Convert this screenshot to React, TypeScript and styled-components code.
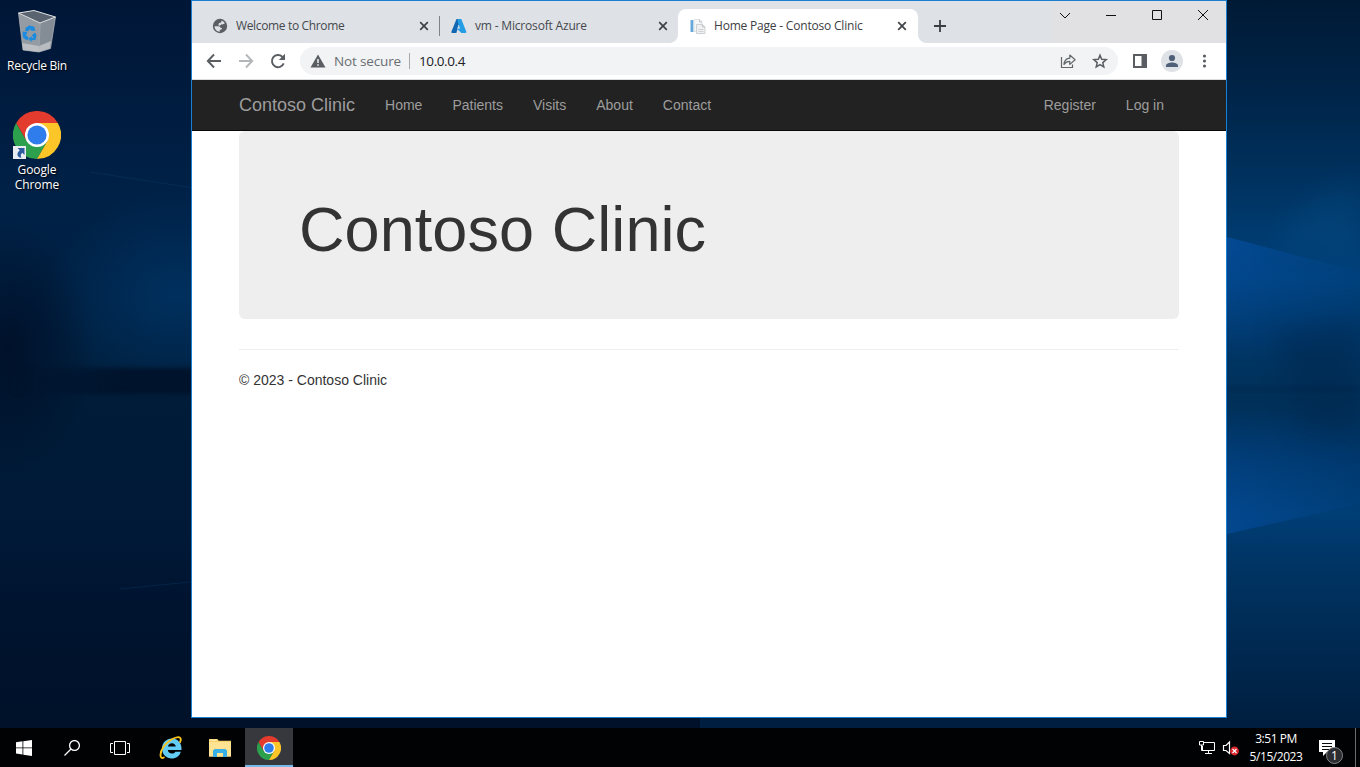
import React from "react";
import styled, { createGlobalStyle, css } from "styled-components";

const ui = `"Open Sans", "Noto Sans", sans-serif`;
const page = `"Liberation Sans", Arial, sans-serif`;

const GlobalStyle = createGlobalStyle`
  * { box-sizing: border-box; }
  body { margin: 0; background: #001a36; overflow: hidden; }
`;

const Screen = styled.div`
  position: relative;
  width: 1360px;
  height: 767px;
  display: flex;
  flex-direction: column;
  overflow: hidden;
  font-family: ${ui};
`;

const WallpaperSvg = styled.svg`
  position: absolute;
  inset: 0;
`;

const Desktop = styled.div`
  position: relative;
  flex: 1;
  display: flex;
`;

const IconColumn = styled.div`
  width: 191px;
  flex: none;
  padding-top: 7px;
`;

const Shortcut = styled.div<{ $gap?: number }>`
  width: 74px;
  display: flex;
  flex-direction: column;
  align-items: center;
  margin-bottom: ${(p) => p.$gap ?? 0}px;
  svg { display: block; flex: none; }
`;

const ShortcutLabel = styled.div<{ $top: number; $spacing?: number }>`
  margin-top: ${(p) => p.$top}px;
  color: #fff;
  font-size: 12px;
  line-height: 15px;
  letter-spacing: ${(p) => p.$spacing ?? 0}px;
  text-align: center;
  white-space: nowrap;
  text-shadow: 1px 1px 2px #000;
`;

const Window = styled.div`
  width: 1036px;
  height: 718px;
  flex: none;
  border: 1px solid #1c80d2;
  background: #fff;
  display: flex;
  flex-direction: column;
`;

const TabStrip = styled.div`
  height: 42px;
  flex: none;
  display: flex;
  align-items: flex-end;
  padding-left: 9px;
  background: linear-gradient(90deg, #dee1e6 860px, #e1e1e3 860px);
`;

const Tab = styled.div<{ $active?: boolean; $divider?: boolean }>`
  position: relative;
  width: 239px;
  height: 34px;
  display: flex;
  align-items: center;
  padding: 0 8px 0 11px;
  color: #45494d;
  font-size: 12px;
  border-radius: 8px 8px 0 0;
  ${(p) => p.$divider && css`
    &::after {
      content: "";
      position: absolute;
      right: 0;
      top: 7px;
      width: 1px;
      height: 20px;
      background: #808488;
    }
  `}
  ${(p) => p.$active && css`
    background: #fff;
    color: #3c4043;
    width: 240px;
    margin-left: -1px;
    padding: 0 8px 0 12px;
    &::before, &::after {
      content: "";
      position: absolute;
      bottom: 0;
      width: 8px;
      height: 8px;
    }
    &::before { left: -8px; background: radial-gradient(circle at 0 0, transparent 7.5px, #fff 8px); }
    &::after { right: -8px; background: radial-gradient(circle at 100% 0, transparent 7.5px, #fff 8px); }
  `}
  svg { flex: none; }
`;

const TabTitle = styled.span<{ $spacing: number }>`
  flex: 1;
  margin-left: 8px;
  line-height: 16px;
  white-space: nowrap;
  letter-spacing: ${(p) => p.$spacing}px;
`;

const NewTab = styled.div`
  width: 28px;
  height: 34px;
  margin-left: 8px;
  display: flex;
  align-items: center;
  justify-content: center;
`;

const Controls = styled.div`
  margin-left: auto;
  align-self: flex-start;
  display: flex;
  height: 28px;
`;

const Control = styled.div`
  width: 46px;
  display: flex;
  align-items: center;
  justify-content: center;
`;

const Toolbar = styled.div`
  height: 37px;
  flex: none;
  display: flex;
  align-items: center;
  padding: 0 6px;
  border-bottom: 1px solid #dadce0;
`;

const ToolButton = styled.div`
  width: 32px;
  height: 28px;
  display: flex;
  align-items: center;
  justify-content: center;
`;

const AddressBar = styled.div`
  flex: 1;
  height: 28px;
  margin: 0 6px 0 6px;
  border-radius: 14px;
  background: #f1f3f4;
  display: flex;
  align-items: center;
  padding: 0 2px 0 10px;
  font-size: 13.5px;
  line-height: 20px;
`;

const Security = styled.span`
  margin-left: 8px;
  padding-right: 8px;
  width: 76px;
  height: 16px;
  line-height: 16px;
  border-right: 1px solid #a5a8ac;
  color: #6a6e72;
  white-space: nowrap;
  letter-spacing: -0.15px;
`;

const Url = styled.span`
  flex: 1;
  margin-left: 9px;
  color: #202124;
  letter-spacing: -0.4px;
`;

const Avatar = styled.div`
  width: 22px;
  height: 22px;
  border-radius: 50%;
  background: #dee1e6;
  display: flex;
  align-items: center;
  justify-content: center;
`;

const NavBar = styled.nav`
  height: 51px;
  flex: none;
  background: #222;
  border-bottom: 1px solid #090909;
  padding: 0 47px 0 32px;
  display: flex;
  align-items: center;
  font: 14px/20px ${page};
  color: #9d9d9d;
`;

const Brand = styled.div`
  padding: 0 15px;
  font-size: 18px;
`;

const NavLink = styled.div<{ $push?: boolean }>`
  padding: 0 15px;
  margin-left: ${(p) => (p.$push ? "auto" : 0)};
`;

const PageBody = styled.main`
  padding: 0 47px;
  font-family: ${page};
`;

const Jumbotron = styled.div`
  height: 188px;
  border-radius: 6px;
  background: #eee;
  padding: 64px 60px 0;
`;

const Heading = styled.h1`
  margin: 0;
  font-size: 63px;
  font-weight: 400;
  line-height: 69px;
  letter-spacing: 0.07px;
  color: #333;
`;

const Footer = styled.footer`
  margin-top: 30px;
  border-top: 1px solid #eee;
  padding-top: 20px;
  font-size: 14px;
  line-height: 20px;
  color: #333;
`;

const Taskbar = styled.div`
  position: relative;
  height: 39px;
  flex: none;
  display: flex;
  background: #010204;
`;

const TaskButton = styled.div<{ $active?: boolean; $gap?: number }>`
  width: 48px;
  margin-left: ${(p) => p.$gap ?? 0}px;
  display: flex;
  align-items: center;
  justify-content: center;
  background: ${(p) => (p.$active ? "#36383d" : "transparent")};
  border-bottom: ${(p) => (p.$active ? "2px solid #76b9ed" : "0")};
  padding-top: ${(p) => (p.$active ? 2 : 1)}px;
`;

const Tray = styled.div`
  margin-left: auto;
  display: flex;
  align-items: center;
  color: #fff;
  font-size: 12px;
  line-height: 18px;
  svg { display: block; }
`;

const Speaker = styled.div`
  margin-left: 6px;
`;

const Clock = styled.div`
  width: 72px;
  text-align: center;
  letter-spacing: -0.45px;
  padding-top: 1px;
`;

const Notifications = styled.div`
  position: relative;
  width: 44px;
  height: 39px;
  padding: 12px 0 0 7px;
  border-right: 1px solid #6a6c6e;
  margin-right: 4px;
`;

const Badge = styled.div`
  position: absolute;
  left: 14px;
  top: 19px;
  width: 17px;
  height: 17px;
  border-radius: 50%;
  border: 1px solid #83868a;
  background: #2b2d30;
  font-size: 12px;
  line-height: 15px;
  text-align: center;
`;

const Wallpaper = () => (
  <WallpaperSvg width="1360" height="767" viewBox="0 0 1360 767">
    <defs>
      <linearGradient id="left" x1="0" y1="0" x2="0" y2="1">
        <stop offset="0" stopColor="#001637" />
        <stop offset=".12" stopColor="#001b3e" />
        <stop offset=".25" stopColor="#002147" />
        <stop offset=".47" stopColor="#00203f" />
        <stop offset=".52" stopColor="#001c38" />
        <stop offset=".7" stopColor="#001937" />
        <stop offset=".78" stopColor="#001430" />
        <stop offset="1" stopColor="#001027" />
      </linearGradient>
      <linearGradient id="right" x1="0" y1="0" x2="0" y2="1">
        <stop offset="0" stopColor="#001a35" />
        <stop offset=".12" stopColor="#002448" />
        <stop offset=".22" stopColor="#00305c" />
        <stop offset=".3" stopColor="#003a6e" />
        <stop offset=".36" stopColor="#00407a" />
        <stop offset=".44" stopColor="#003768" />
        <stop offset=".52" stopColor="#003058" />
        <stop offset=".6" stopColor="#00386c" />
        <stop offset=".67" stopColor="#003e76" />
        <stop offset=".73" stopColor="#003565" />
        <stop offset=".85" stopColor="#002850" />
        <stop offset="1" stopColor="#001936" />
      </linearGradient>
      <linearGradient id="upper" x1="0" y1="0" x2="0" y2="1">
        <stop offset="0" stopColor="#0550a4" stopOpacity=".7" />
        <stop offset=".35" stopColor="#0550a4" stopOpacity=".45" />
        <stop offset="1" stopColor="#0550a4" stopOpacity="0" />
      </linearGradient>
      <linearGradient id="lower" x1="0" y1="0" x2="0" y2="1">
        <stop offset="0" stopColor="#0550a4" stopOpacity="0" />
        <stop offset=".7" stopColor="#0550a4" stopOpacity=".45" />
        <stop offset="1" stopColor="#0550a4" stopOpacity=".6" />
      </linearGradient>
      <linearGradient id="fade" x1="0" x2="1">
        <stop offset="0" stopColor="#fff" />
        <stop offset="1" stopColor="#fff" stopOpacity=".15" />
      </linearGradient>
      <mask id="fadeOut"><rect x="1227" width="133" height="767" fill="url(#fade)" /></mask>
      <radialGradient id="glow">
        <stop offset="0" stopColor="#003568" stopOpacity=".75" />
        <stop offset="1" stopColor="#003568" stopOpacity="0" />
      </radialGradient>
      <radialGradient id="shade">
        <stop offset="0" stopColor="#000d25" stopOpacity=".8" />
        <stop offset="1" stopColor="#000d25" stopOpacity="0" />
      </radialGradient>
      <linearGradient id="band" x1="0" x2="1">
        <stop offset="0" stopColor="#00122a" stopOpacity="0" />
        <stop offset=".5" stopColor="#00122a" stopOpacity=".9" />
      </linearGradient>
      <filter id="soft" x="-40%" y="-40%" width="180%" height="180%" colorInterpolationFilters="sRGB"><feGaussianBlur stdDeviation="13" /></filter>
      <filter id="edge" x="-10%" y="-20%" width="120%" height="140%" colorInterpolationFilters="sRGB"><feGaussianBlur stdDeviation="2" /></filter>
    </defs>
    <rect width="700" height="767" fill="url(#left)" />
    <ellipse cx="175" cy="295" rx="130" ry="105" fill="url(#glow)" />
    <ellipse cx="10" cy="350" rx="85" ry="130" fill="url(#shade)" />
    <rect x="10" y="368" width="220" height="26" fill="url(#band)" filter="url(#edge)" />
    <path d="M90 172l110 17M120 589l80-8" stroke="#124777" strokeWidth="1" opacity=".3" />
    <rect x="700" width="660" height="767" fill="url(#right)" />
    <g mask="url(#fadeOut)">
      <path d="M1227 237l133 35v90H1227z" fill="url(#upper)" />
      <path d="M1227 410h133v94l-133 30z" fill="url(#lower)" />
    </g>
    <path d="M1278 232l38-36 44-14v78l-80-14z" fill="#08518a" opacity=".3" filter="url(#soft)" />
    <path d="M1275 330l85-10v120l-60-10z" fill="#002247" opacity=".35" filter="url(#soft)" />
    <rect x="1227" y="386" width="133" height="6" fill="#002248" opacity=".35" filter="url(#edge)" />
  </WallpaperSvg>
);

const ChromeLogo = ({ size, arrow }: { size: number; arrow?: boolean }) => (
  <svg width={size} height={size} viewBox="0 0 48 48">
    <path d="M3.2 12A24 24 0 0 0 24 48L34.4 30 24 24 13.6 30z" fill="#2da04e" />
    <path d="M44.8 12A24 24 0 0 1 24 48L34.4 30 24 12z" fill="#fcc629" />
    <path d="M24 12h20.8A24 24 0 0 0 3.2 12l10.4 18L24 24z" fill="#e33b2e" />
    <circle cx="24" cy="24" r="12" fill="#fff" />
    <circle cx="24" cy="24" r="9.6" fill="#2f7cec" />
    {arrow && (
      <g>
        <path d="M0 35h13v13H0z" fill="#e9edf1" />
        <path d="M4.500 37h7v7l-2.200-2.200c-1.800 1.700-2 2.800-.8 5C4 46.500 3 42.500 6.800 39.300z" fill="#2b5a9e" />
      </g>
    )}
  </svg>
);

const RecycleBin = () => (
  <svg width="40" height="46" viewBox="0 0 40 46">
    <path d="M1.500 6L23 16l-1 29L6 43z" fill="#949ba3" />
    <path d="M23 16L38.500 10 33.500 41.500 22 45z" fill="#848c95" />
    <path d="M1.500 6L17 3.500 38.500 10 23 16z" fill="#5a6470" />
    <path d="M5 36l17 3 12-5-1 7.500L22 45 6 43z" fill="#c6c8ca" opacity=".8" />
    <path d="M23 16l-1 29M1.500 6L6 43l16 2 11.500-3.500L38.500 10" fill="none" stroke="#b4b9be" strokeWidth=".700" />
    <path d="M1.500 6L17 3.500 38.500 10 23 16z" fill="none" stroke="#e3e5e7" />
    <g fill="#1c8ade">
      <path d="M8.500 21l3.500-2.500 5 1 1.500 4-4 .5-1.500-2-2 2.500-3-1z" />
      <path d="M5.500 24.500l5 .5-1.500 3 3 3-2 2.500-4-3z" />
      <path d="M15 28l3-2.500 1.500 2.500-1 5-4 .3v2L11.500 32l3-3 .3 2h1.500z" />
    </g>
  </svg>
);

const Globe = () => (
  <svg width="16" height="16" viewBox="0 0 16 16">
    <circle cx="8" cy="8" r="7.200" fill="#5b5f63" />
    <path d="M2.500 8.200h4c1.500 0 2 .8 2 1.800h1.500c0 1.600-1 1.800-2.200 1.800v1.900C4.800 13.600 2.500 11 2.500 8.200zM9.500 2.500c1.300.4 2.600 1.300 3.300 2.500-.9 1.400-2.100 1.500-3.500 1.300-.2 1.300-1.600 1.200-2.800 1.200 0-1.700.2-2.600 1.800-2.700 1.100-.1 1.200-1 1.200-2.300z" fill="#dee1e6" />
  </svg>
);

const Azure = () => (
  <svg width="16" height="16" viewBox="0 0 16 16">
    <path d="M5.500 1h4.300L5.300 15H1.200c-.7 0-1-.6-.8-1.200z" fill="#1267b2" />
    <path d="M6 10h6l-1.500-4z" fill="#0b72c6" />
    <path d="M6.500 1h3.800l5 12.800c.3.700-.2 1.200-.9 1.200h-4L5.800 10.500l3.200-.300L7 4.500z" fill="#249de4" />
    <path d="M7.700 6.500l1.500 4H6.200z" fill="#bfdcef" />
  </svg>
);

const PageIcon = () => (
  <svg width="16" height="16" viewBox="0 0 16 16">
    <path d="M.500 2h3v12h-3z" fill="#65a8dc" />
    <path d="M4 1.500h5.500l2.500 2v10H4z" fill="#f5f6f7" stroke="#e0e3e5" />
    <path d="M6.500 6.500h6l2.500 2.500v6.500H6.500z" fill="#f0f1f2" stroke="#cdd1d4" />
    <path d="M9.500 1.500v2.500h2.500M12.500 6.500V9H15" fill="none" stroke="#bfc4c8" />
    <path d="M8.500 11.500h5M8.500 13.500h5" stroke="#cfd3d6" />
  </svg>
);

const CloseX = () => (
  <svg width="16" height="16" viewBox="0 0 16 16">
    <path d="M4.200 4.200l7.600 7.600M11.800 4.200l-7.600 7.600" stroke="#3f4347" strokeWidth="1.700" />
  </svg>
);

const Arrow = ({ forward }: { forward?: boolean }) => (
  <svg width="16" height="16" viewBox="0 0 16 16">
    <path
      d={forward ? "M1 8h13M8 1.500L14.200 8 8 14.500" : "M15 8H2M8 1.500L1.800 8 8 14.500"}
      fill="none" stroke={forward ? "#b4b7ba" : "#5a5e63"} strokeWidth="1.900"
    />
  </svg>
);

const Reload = () => (
  <svg width="16" height="16" viewBox="0 0 16 16">
    <path d="M13.700 10.300a6.100 6.100 0 1 1-1.400-6.600L13.700 5" fill="none" stroke="#5a5e63" strokeWidth="1.900" />
    <path d="M15 .800V7H8.800z" fill="#5a5e63" />
  </svg>
);

const Warning = () => (
  <svg width="16" height="16" viewBox="0 0 16 16">
    <path d="M8 1.500L15.500 14.500H.500z" fill="#5a5e63" />
    <path d="M8 6v4M8 11.200v1.600" stroke="#f1f3f4" strokeWidth="1.500" />
  </svg>
);

const Share = () => (
  <svg width="16" height="16" viewBox="0 0 16 16">
    <path d="M1.500 4v10.500h11V11.500" fill="none" stroke="#62666a" strokeWidth="1.200" />
    <path d="M4 11.500c.3-4 2.300-6 5.800-6.300V2l5.300 4.700-5.300 4.700V8.300C7 8.300 5.300 9.500 4 11.500z" fill="none" stroke="#62666a" strokeWidth="1.200" strokeLinejoin="round" />
  </svg>
);

const Star = () => (
  <svg width="16" height="16" viewBox="0 0 16 16">
    <path d="M8 2.200l1.700 4 4.500.4-3.400 3 1 4.400L8 11.700 4.200 14l1-4.400-3.400-3 4.500-.4z" fill="none" stroke="#5a5e63" strokeWidth="1.500" />
  </svg>
);

const SidePanel = () => (
  <svg width="16" height="16" viewBox="0 0 16 16">
    <path d="M1 1h14v14H1z" fill="#5a5e63" />
    <path d="M3 3h6.500v10H3z" fill="#fff" />
  </svg>
);

const Person = () => (
  <svg width="14" height="14" viewBox="0 0 14 14">
    <circle cx="7" cy="4" r="3.100" fill="#4f5f78" />
    <path d="M1 13v-1.500C1 9.500 4.500 8.500 7 8.500s6 1 6 3V13z" fill="#4f5f78" />
  </svg>
);

const Dots = () => (
  <svg width="16" height="16" viewBox="0 0 16 16" fill="#5a5e63">
    <circle cx="8.500" cy="3" r="1.600" />
    <circle cx="8.500" cy="8" r="1.600" />
    <circle cx="8.500" cy="13" r="1.600" />
  </svg>
);

const controlPaths = ["M0 3l5 5 5-5", "M0 5.500h10", "M.500.500h9v9h-9z", "M0 0l10 10M10 0L0 10"];

const WindowsLogo = () => (
  <svg width="16" height="16" viewBox="0 0 16 16" fill="#fff">
    <path d="M0 2.200L6.500 1.300v6.200H0zM7.300 1.200L16 0v7.500H7.300zM0 8.300h6.500v6.200L0 13.600zM7.300 8.300H16V16l-8.700-1.200z" />
  </svg>
);

const Search = () => (
  <svg width="16" height="16" viewBox="0 0 16 16" fill="none" stroke="#fff" strokeWidth="1.300">
    <circle cx="10.500" cy="5.500" r="4.900" />
    <path d="M7 9L.500 15.500" />
  </svg>
);

const TaskView = () => (
  <svg width="20" height="14" viewBox="0 0 20 14" fill="none" stroke="#fff">
    <path d="M4.500.500h11v13h-11zM3 2.500H.500v9H3M17 2.500h2.500v9H17" />
  </svg>
);

const Explorer = () => (
  <svg width="24" height="24" viewBox="0 0 24 24">
    <path d="M12.800 2.500C7.500 2.500 3 6.800 3 12.500S7.300 22.500 12.800 22.500c4.300 0 7.800-2.500 9-6.800h-5.300c-.8 1.300-2 1.900-3.500 1.900-2.300 0-4-1.400-4.200-3.600h13.700C23 7.200 18.700 2.500 12.800 2.500zM8.900 10.500c.4-1.900 1.900-3.200 4-3.200s3.600 1.300 3.900 3.200z" fill="#63cdf6" />
    <path d="M4.800 21.500C3 22.500 1.500 21.800 1.500 19c0-5.500 5-12 11-15.500 3.500-2 7.500-3 8.800-1.500.8 1 .5 2.500-.2 4" fill="none" stroke="#f8c51d" strokeWidth="1.900" strokeLinecap="round" />
  </svg>
);

const Folder = () => (
  <svg width="22" height="18" viewBox="0 0 22 18">
    <path d="M0 0h8.500l1.200 1.700H22v15.800H0z" fill="#f7d36b" />
    <path d="M0 3h22v14.500H0z" fill="#fde392" />
    <path d="M1.500 1.200h6" stroke="#fff3c7" />
    <path d="M4 18v-6.500L5.500 10h11l1.500 1.500V18h-4v-4H8v4z" fill="#39b0e5" />
    <path d="M8 14h6v3.500H8z" fill="#fde392" />
  </svg>
);

const Network = () => (
  <svg width="18" height="16" viewBox="0 0 18 16" fill="none" stroke="#fff">
    <path d="M6 2.500h10.500v8H4.500V6M10.500 10.500v3M7 13.500h7M1.500 1.500h4v3.500h-4zM3.500 5v5.500h2" />
  </svg>
);

const Volume = () => (
  <svg width="18" height="16" viewBox="0 0 18 16">
    <path d="M1.500 5.500h2.500L7.500 2v11.500L4 10.500H1.500z" fill="none" stroke="#fff" strokeWidth="1.200" />
    <circle cx="12.500" cy="11" r="4.400" fill="#d9262f" />
    <path d="M10.500 9l4 4M14.500 9l-4 4" stroke="#fff" strokeWidth="1.200" />
  </svg>
);

const Message = () => (
  <svg width="16" height="16" viewBox="0 0 16 16">
    <path d="M0 0h16v12H8l-4 4v-4H0z" fill="#fff" />
    <path d="M3 3.500h10M3 6.500h10M3 9.500h7" stroke="#090a0c" />
  </svg>
);

export default function App() {
  return (
    <Screen>
      <GlobalStyle />
      <Wallpaper />
      <Desktop>
        <IconColumn>
          <Shortcut $gap={38}>
            <RecycleBin />
            <ShortcutLabel $top={5} $spacing={-0.25}>Recycle Bin</ShortcutLabel>
          </Shortcut>
          <Shortcut>
            <ChromeLogo size={48} arrow />
            <ShortcutLabel $top={3} $spacing={-0.1}>Google<br />Chrome</ShortcutLabel>
          </Shortcut>
        </IconColumn>
        <Window>
          <TabStrip>
            <Tab $divider><Globe /><TabTitle $spacing={-0.35}>Welcome to Chrome</TabTitle><CloseX /></Tab>
            <Tab><Azure /><TabTitle $spacing={-0.18}>vm - Microsoft Azure</TabTitle><CloseX /></Tab>
            <Tab $active><PageIcon /><TabTitle $spacing={-0.2}>Home Page - Contoso Clinic</TabTitle><CloseX /></Tab>
            <NewTab>
              <svg width="12" height="12" viewBox="0 0 12 12"><path d="M6 0v12M0 6h12" stroke="#3a3e42" strokeWidth="1.800" /></svg>
            </NewTab>
            <Controls>
              {controlPaths.map((d) => (
                <Control key={d}>
                  <svg width="10" height="10" viewBox="0 0 10 10" overflow="visible"><path d={d} fill="none" stroke="#111" /></svg>
                </Control>
              ))}
            </Controls>
          </TabStrip>
          <Toolbar>
            <ToolButton><Arrow /></ToolButton>
            <ToolButton><Arrow forward /></ToolButton>
            <ToolButton><Reload /></ToolButton>
            <AddressBar>
              <Warning />
              <Security>Not secure</Security>
              <Url>10.0.0.4</Url>
              <ToolButton><Share /></ToolButton>
              <ToolButton><Star /></ToolButton>
            </AddressBar>
            <ToolButton><SidePanel /></ToolButton>
            <ToolButton><Avatar><Person /></Avatar></ToolButton>
            <ToolButton><Dots /></ToolButton>
          </Toolbar>
          <NavBar>
            <Brand>Contoso Clinic</Brand>
            <NavLink>Home</NavLink>
            <NavLink>Patients</NavLink>
            <NavLink>Visits</NavLink>
            <NavLink>About</NavLink>
            <NavLink>Contact</NavLink>
            <NavLink $push>Register</NavLink>
            <NavLink>Log in</NavLink>
          </NavBar>
          <PageBody>
            <Jumbotron><Heading>Contoso Clinic</Heading></Jumbotron>
            <Footer>© 2023 - Contoso Clinic</Footer>
          </PageBody>
        </Window>
      </Desktop>
      <Taskbar>
        <TaskButton><WindowsLogo /></TaskButton>
        <TaskButton><Search /></TaskButton>
        <TaskButton><TaskView /></TaskButton>
        <TaskButton $gap={3}><Explorer /></TaskButton>
        <TaskButton $gap={1}><Folder /></TaskButton>
        <TaskButton $gap={1} $active><ChromeLogo size={24} /></TaskButton>
        <Tray>
          <Network />
          <Speaker><Volume /></Speaker>
          <Clock>3:51 PM<br />5/15/2023</Clock>
          <Notifications><Message /><Badge>1</Badge></Notifications>
        </Tray>
      </Taskbar>
    </Screen>
  );
}
